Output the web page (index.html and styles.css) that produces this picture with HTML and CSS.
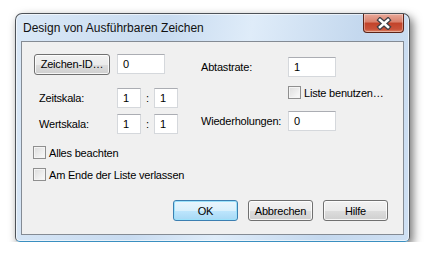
FILE: index.html
```html
<!DOCTYPE html>
<html>
<head>
<link rel="stylesheet" href="styles.css">
</head>
<body>

<!-- The dialog window -->
<div class="window">

  <!-- Title bar -->
  <div class="titlebar">
    <span class="title">Design von Ausführbaren Zeichen</span>
    <span class="close">
      <svg width="16" height="13" viewBox="0 0 16 13">
        <path d="M4 3 L12 10 M12 3 L4 10" stroke="#3f3f46" stroke-width="5" stroke-linecap="square"/>
        <path d="M4 3 L12 10 M12 3 L4 10" stroke="#ffffff" stroke-width="2.6" stroke-linecap="square"/>
      </svg>
    </span>
  </div>

  <!-- Dialog content -->
  <div class="client">
    <div class="columns">
      <div class="col-left">
        <div class="row">
          <button class="btn btn-id" type="button">Zeichen-ID…</button>
          <div class="field field-id">0</div>
        </div>
        <div class="row row-scale first-scale">
          <span class="label">Zeitskala:</span>
          <div class="field field-small">1</div>
          <span class="colon">:</span>
          <div class="field field-small">1</div>
        </div>
        <div class="row row-scale">
          <span class="label">Wertskala:</span>
          <div class="field field-small">1</div>
          <span class="colon">:</span>
          <div class="field field-small">1</div>
        </div>
        <label class="check check-first"><span class="box"></span>Alles beachten</label>
        <label class="check check-second"><span class="box"></span>Am Ende der Liste verlassen</label>
      </div>

      <div class="col-right">
        <div class="row row-rate">
          <span class="label label-wide">Abtastrate:</span>
          <div class="field field-id">1</div>
        </div>
        <label class="check check-list"><span class="box"></span>Liste benutzen…</label>
        <div class="row row-repeat">
          <span class="label label-wide">Wiederholungen:</span>
          <div class="field field-id">0</div>
        </div>
      </div>
    </div>

    <div class="buttons">
      <button class="btn btn-default" type="button">OK</button>
      <button class="btn" type="button">Abbrechen</button>
      <button class="btn" type="button">Hilfe</button>
    </div>
  </div>

</div>

</body>
</html>
```

FILE: styles.css
```css
body {
    margin: 0;
    background-color: #ffffff;
    font-family: "Liberation Sans", Arial, sans-serif;
    font-size: 11px;
    letter-spacing: -0.2px;
    color: #000;
}

/* The window frame */
.window {
    box-sizing: border-box;
    margin: 13px 0 0 15px;
    width: 395px;
    height: 229px;
    padding: 0 5px 6px 5px;
    border: 1px solid #4d5258;
    border-bottom-color: #3a8fc0;
    border-radius: 7px 7px 5px 5px;
    background: linear-gradient(100deg, #dae8f7 0%, #c8dbf0 35%, #dfecf9 55%, #c4d8ee 80%, #cfe0f3 100%);
    box-shadow: inset 0 0 0 1px rgba(255,255,255,0.6), 3px 4px 10px rgba(0,0,0,0.55);
}

/* Title bar */
.titlebar {
    display: flex;
    justify-content: space-between;
    align-items: flex-start;
    height: 27px;
}

.title {
    padding: 7px 0 0 2px;
    font-size: 12px;
    letter-spacing: 0;
    color: #111;
}

/* The Close Button */
.close {
    display: flex;
    align-items: center;
    justify-content: center;
    box-sizing: border-box;
    width: 41px;
    height: 19px;
    border: 1px solid #5c2418;
    border-top: none;
    border-radius: 0 0 4px 4px;
    background: linear-gradient(#e9a99a 0%, #d9806b 45%, #c2432a 50%, #c9533a 85%, #e08a6c 100%);
    box-shadow: inset 0 0 0 1px rgba(255,255,255,0.35);
}

/* Client area */
.client {
    box-sizing: border-box;
    height: 194px;
    padding: 12px 15px 0 12px;
    border: 1px solid #848b94;
    background-color: #f0f0f0;
}

.columns {
    display: flex;
}

.col-left {
    width: 167px;
    display: flex;
    flex-direction: column;
}

.col-right {
    display: flex;
    flex-direction: column;
}

.row {
    display: flex;
    align-items: center;
    height: 20px;
}

.label {
    width: 78px;
    padding-left: 5px;
}

.label-wide {
    width: 87px;
    padding-left: 0;
}

.first-scale {
    margin-top: 14px;
}

.row-scale + .row-scale {
    margin-top: 6px;
}

.row-rate {
    margin-top: 3px;
}

.row-repeat {
    margin-top: 12px;
}

.colon {
    width: 13px;
    text-align: center;
}

/* Text boxes */
.field {
    box-sizing: border-box;
    height: 20px;
    line-height: 18px;
    padding-left: 5px;
    border: 1px solid #d5d8dc;
    border-top-color: #abadb3;
    background-color: #ffffff;
}

.field-id {
    width: 48px;
    margin-left: 7px;
}

.col-right .field-id {
    margin-left: 0;
}

.field-small {
    width: 24px;
}

/* Buttons */
.btn {
    box-sizing: border-box;
    height: 21px;
    padding: 0;
    border: 1px solid #707070;
    border-radius: 3px;
    background: linear-gradient(#f2f2f2 0%, #ebebeb 50%, #dddddd 51%, #cfcfcf 100%);
    box-shadow: inset 0 0 0 1px rgba(255,255,255,0.8);
    font-family: "Liberation Sans", Arial, sans-serif;
    font-size: 11px;
    letter-spacing: -0.2px;
    color: #000;
}

.btn-id {
    width: 76px;
}

.btn-default {
    border-color: #3c7fb1;
    background: linear-gradient(#eaf6fd 0%, #d9f0fc 50%, #bee6fd 51%, #a7d9f5 100%);
    box-shadow: inset 0 0 0 1px #9ce2fb;
}

.buttons {
    display: flex;
    justify-content: flex-end;
    gap: 10px;
    margin-top: 19px;
}

.buttons .btn {
    width: 65px;
}

/* Check boxes */
.check {
    display: flex;
    align-items: center;
    gap: 3px;
    height: 13px;
    white-space: nowrap;
}

.check-first {
    margin: 12px 0 0 -1px;
}

.check-second {
    margin: 9px 0 0 -1px;
}

.check-list {
    margin: 9px 0 0 87px;
}

.box {
    box-sizing: border-box;
    width: 13px;
    height: 13px;
    border: 1px solid #8f8f8f;
    background: linear-gradient(135deg, #dcdcdc, #fbfbfb);
    box-shadow: inset 0 0 0 1px #f4f4f4;
}
```
